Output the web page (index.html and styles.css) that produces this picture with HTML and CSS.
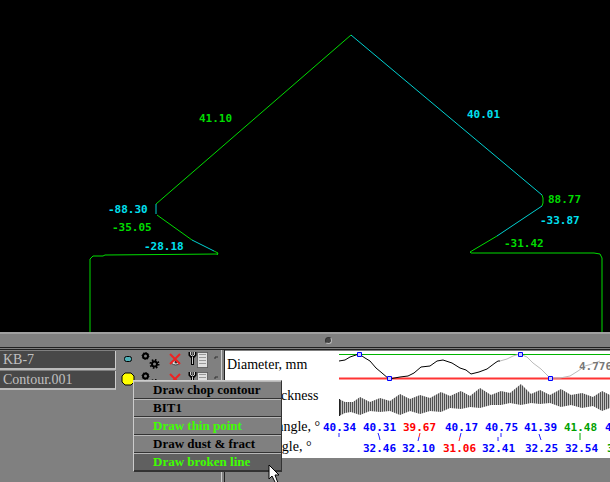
FILE: index.html
```
<!DOCTYPE html>
<html lang="en">
<head>
<meta charset="utf-8">
<title>Contour viewer</title>
<link rel="stylesheet" href="styles.css">
</head>
<body>
<main class="app">
  <svg class="scene" viewBox="0 0 610 332" role="img" aria-label="Contour with facet angles">
    <g class="edge green">
      <path d="M351 35L156 204M157 215L192 240M218 254L105 255L103 256H93L90 259V332"/>
      <path d="M542 195L543 198V203L542 206M497 236L470 252L471 253H594L600 254L602 258V332"/>
    </g>
    <g class="edge cyan">
      <path d="M351 35L542 195M542 206L497 236M156 204V214M192 240L214 251"/>
    </g>
    <path class="edge green" d="M214 251L218 253L217 255"/>
    <g class="reading green">
      <text x="199" y="122">41.10</text>
      <text x="112" y="231">-35.05</text>
      <text x="548" y="203">88.77</text>
      <text x="504" y="247">-31.42</text>
    </g>
    <g class="reading cyan">
      <text x="467" y="118">40.01</text>
      <text x="108" y="213">-88.30</text>
      <text x="144" y="250">-28.18</text>
      <text x="540" y="224">-33.87</text>
    </g>
  </svg>
  <div class="splitter"><span class="grip"></span></div>
  <section class="lower">
    <div class="objects">
      <div class="object">
        <button class="name">KB-7</button>
        <svg class="tools" viewBox="116 350 105 19" aria-hidden="true">
          <rect x="124.500" y="355.500" width="7" height="5" rx="2" fill="#4eb1b8" stroke="#000"/>
          <use href="#tools"/>
        </svg>
      </div>
      <div class="object">
        <button class="name">Contour.001</button>
        <svg class="tools" viewBox="116 350 105 19" aria-hidden="true">
          <path d="M125 352H131L134 355V361L131 364H125L122 361V355Z" fill="#ff0" stroke="#000"/>
          <use href="#tools"/>
        </svg>
      </div>
      <div class="menu" role="menu">
        <button role="menuitem">Draw chop contour</button>
        <button role="menuitem">BIT1</button>
        <button role="menuitem" class="on">Draw thin point</button>
        <button role="menuitem">Draw dust &amp; fract</button>
        <button role="menuitem" class="on active">Draw broken line</button>
      </div>
    </div>
    <div class="divider"></div>
    <div class="charts">
      <div class="labels">
        <span class="tall">Diameter, mm</span>
        <span class="tall">Girdle thickness</span>
        <span>Pavilion angle, °</span>
        <span>Crown angle, °</span>
      </div>
      <svg class="plot" viewBox="339 351 271 107" preserveAspectRatio="xMinYMin slice" role="img" aria-label="Measurements">
        <defs>
          <pattern id="bars" width="2" height="8" patternUnits="userSpaceOnUse"><path d="M0 0H1V8H0Z" fill="#505050"/><path d="M1 0H2V8H1Z" fill="#c0c0c0"/></pattern>
        </defs>
        <path class="max" d="M339 354.5H610"/>
        <path class="min" d="M339 378.5H610"/>
        <path class="curve" d="M339 361L345 360L350 357L359 354L365 358L370 361L376 368L382 373L389 379L400 377L408 376L414 373L421 367L430 366L437 361L443 360L452 363L460 368L466 370L471 374L479 372L487 369L495 363L498 361L500 361"/>
        <path class="curve pale" d="M500 361L507 359L513 356L520 354L527 357L533 363L541 369L550 378L560 378L570 376L578 371L585 366L592 364L600 361"/>
        <path class="mark" d="M357.500 352.500h4v4h-4zM387.500 376.500h4v4h-4zM518.500 352.500h4v4h-4zM548.500 376.500h4v4h-4z"/>
        <text class="last" x="579" y="370">4.776</text>
        <path fill="url(#bars)" d="M339 399L345 402L353 402L360 397L370 402L380 398L390 401L400 394L410 399L420 395L430 398L441 392L450 396L461 391L470 396L480 388L491 395L501 391L510 393L521 384L531 394L540 390L550 395L561 389L571 395L582 393L593 397L602 391L610 395V408L602 411L593 406L582 408L571 405L561 407L550 403L540 404L531 403L521 405L510 403L501 405L491 405L480 408L470 407L461 409L450 408L441 412L430 411L420 414L410 411L400 415L390 411L380 412L370 411L360 415L351 412L345 413L339 416Z"/>
        <path fill="#222" d="M339 399h1v17h-1z"/>
        <g class="value">
          <text x="323" y="431">40.34</text><text x="363" y="431">40.31</text><text class="bad" x="403" y="431">39.67</text><text x="445" y="431">40.17</text><text x="485" y="431">40.75</text><text x="524" y="431">41.39</text><text class="good" x="564" y="431">41.48</text><text x="605" y="431">41.10</text>
          <text x="363" y="452">32.46</text><text x="402" y="452">32.10</text><text class="bad" x="443" y="452">31.06</text><text x="482" y="452">32.41</text><text x="525" y="452">32.25</text><text x="565" y="452">32.54</text><text class="good" x="607" y="452">33.10</text>
        </g>
        <path class="tick" d="M339 433v4M378 433l1 3l1 4M419 437l-1 4M461 433l-1 4M501 433v4M498 437v4M539 434l2 6"/>
        <path class="tick red" d="M420 433l-1 4M460 437l-1 4"/>
        <path class="tick green" d="M580 433v7"/>
      </svg>
    </div>
  </section>
  <svg class="cursor" viewBox="0 0 12 20" aria-hidden="true"><path d="M1 1V15L4 12L8 20L10 19L7 11H11Z" fill="#fff" stroke="#000"/></svg>
</main>
<svg class="defs" aria-hidden="true">
  <g id="tools">
    <circle cx="145.500" cy="355" r="2.500" fill="none" stroke="#000" stroke-width="2"/>
    <circle cx="145.500" cy="355" r="3.500" fill="none" stroke="#000" stroke-dasharray="1 1.700"/>
    <circle cx="154.500" cy="363" r="2.500" fill="none" stroke="#000" stroke-width="2"/>
    <circle cx="154.500" cy="363" r="4" fill="none" stroke="#000" stroke-width="2" stroke-dasharray="1.500 1.640"/>
    <path d="M171 362q4-6 9 0q-4 4-9 0" fill="#ddd" stroke="#444"/>
    <circle cx="176" cy="361" r="1.500" fill="#333"/>
    <path d="M170 353L180 363M180 353L170 363" stroke="#e22" stroke-width="2"/>
    <path d="M190 351v3l2 2h1l2-2v-3M192.500 356v8" fill="none" stroke="#000" stroke-width="3"/>
    <path d="M190.500 351v3l2 1l2-1v-3M192.500 356v7" fill="none" stroke="#ccc"/>
    <path d="M197.500 351.500h10v15h-10z" fill="#e0e0e0" stroke="#222" stroke-dasharray="1 1"/>
    <path d="M199 353.500h7M199 356.500h7M199 359.500h7M199 362.500h7" stroke="#999"/>
    <path d="M215 358v-2h3" fill="none" stroke="#333"/>
  </g>
</svg>
</body>
</html>
```
FILE: styles.css
```
* { box-sizing: border-box; }
body { margin: 0; background: #808080; font: bold 13px/16px "Liberation Serif", serif; }
button { font: inherit; border: 0; margin: 0; text-align: left; }
.app { position: relative; min-height: 100vh; overflow: hidden; }
.scene { display: block; width: 100%; background: #000; }
.edge { fill: none; stroke-width: 1; }
.edge.green { stroke: #00dc00; }
.edge.cyan { stroke: #00d0d0; }
.reading, .value, .last { font: bold 11px "DejaVu Sans Mono", monospace; }
.reading.green { fill: #00dc00; }
.reading.cyan { fill: #00e0f0; }
.splitter { height: 18px; display: flex; align-items: center; justify-content: center; padding-left: 46px; background: #808080; border-top: 2px solid #a0a0a0; border-bottom: 3px double #222; }
.grip { width: 7px; height: 7px; border-radius: 50%; background: #444; border: 1px solid #bbb; border-top-color: #333; border-left-color: #333; }
.lower { display: flex; align-items: flex-start; }
.objects { position: relative; width: 221px; flex: none; padding-top: 1px; }
.object { display: flex; height: 20px; }
.name { width: 116px; height: 19px; padding: 0 3px; background: #484848; color: #c0c0c0; border-right: 1px solid #ccc; border-bottom: 2px solid #bbb; font-size: 14px; font-weight: normal; }
.tools { width: 105px; height: 19px; }
.divider { width: 4px; align-self: stretch; border-left: 1px solid #ccc; border-right: 1px solid #222; min-height: 132px; }
.charts { flex: 1; min-width: 0; display: flex; margin-top: 1px; height: 107px; background: #fff; overflow: hidden; }
.labels { width: 114px; flex: none; padding: 6px 0 0 2px; display: flex; flex-direction: column; white-space: nowrap; font-size: 14px; font-weight: normal; }
.labels span { height: 20px; }
.labels .tall { height: 32px; }
.plot { flex: 1; min-width: 0; height: 107px; overflow: visible; }
.max { stroke: #00b400; }
.min { stroke: #f33; stroke-width: 2; }
.curve { fill: none; stroke: #000; }
.curve.pale { stroke: #bbb; }
.mark { fill: #ccf; stroke: #00f; }
.last { fill: #777; }
.value { fill: #00f; }
.bad { fill: #f00; }
.good { fill: #00a000; }
.tick { fill: none; stroke: #22f; }
.tick.red { stroke: #f22; }
.tick.green { stroke: #0a0; }
.menu { position: absolute; z-index: 2; left: 133px; top: 30px; width: 149px; border: 1px solid #333; border-left-color: #ccc; border-top-color: #ccc; background: #808080; }
.menu button { display: block; width: 100%; height: 18px; padding: 0 0 0 19px; background: #808080; border-top: 1px solid #b8b8b8; border-bottom: 1px solid #333; color: #000; }
.menu .on { color: #40ff00; }
.menu .active { background: #606060; }
.cursor { position: absolute; z-index: 3; left: 268px; top: 464px; width: 12px; height: 20px; }
.defs { position: absolute; width: 0; height: 0; }
```
